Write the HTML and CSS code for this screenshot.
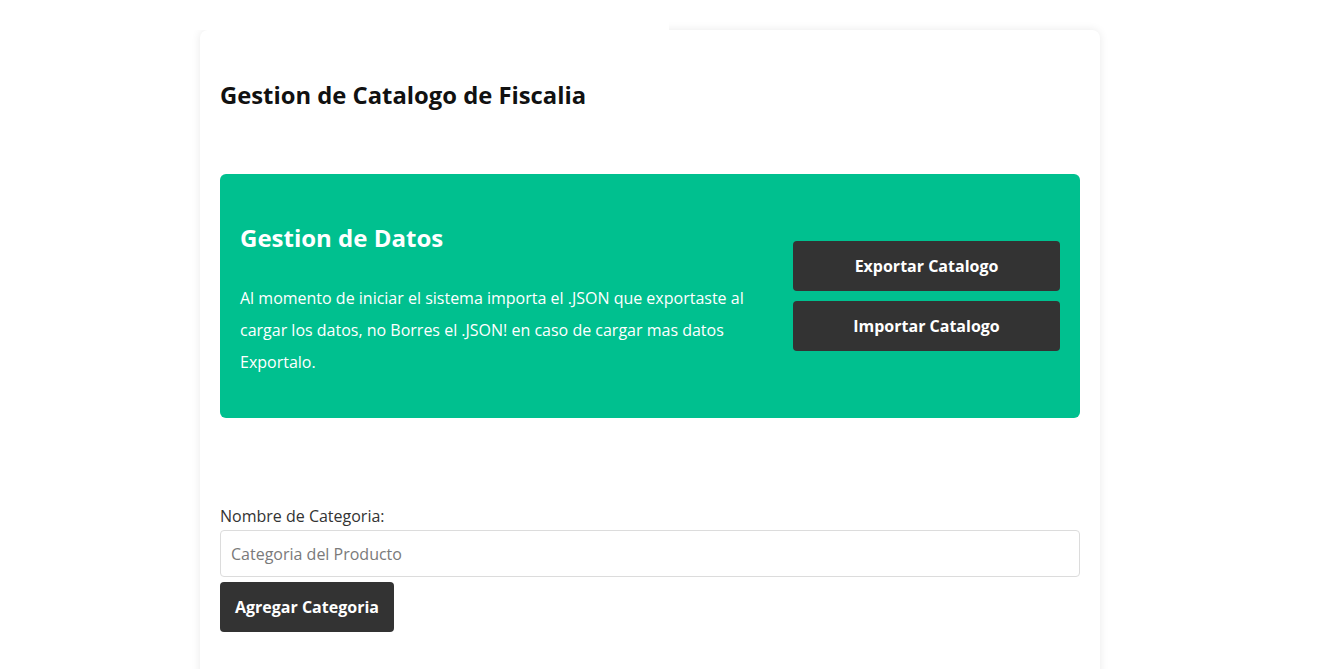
FILE: index.html
```html
<!DOCTYPE html>
<html lang="es">
<head>
<meta charset="utf-8">
<title>Gestion de Catalogo de Fiscalia</title>
<link rel="stylesheet" href="styles.css">
</head>
<body>
<div class="topbar"></div>
<main class="card">
  <h1 class="title">Gestion de Catalogo de Fiscalia</h1>
  <section class="data-box">
    <div class="data-text">
      <h2 class="data-title">Gestion de Datos</h2>
      <p class="data-desc">Al momento de iniciar el sistema importa el .JSON que exportaste al cargar los datos, no Borres el .JSON! en caso de cargar mas datos Exportalo.</p>
    </div>
    <div class="data-actions">
      <button class="btn btn-wide" type="button">Exportar Catalogo</button>
      <button class="btn btn-wide" type="button">Importar Catalogo</button>
    </div>
  </section>
  <form class="cat-form">
    <label class="cat-label" for="cat">Nombre de Categoria:</label>
    <input class="cat-input" id="cat" type="text" placeholder="Categoria del Producto">
    <button class="btn btn-add" type="button">Agregar Categoria</button>
  </form>
</main>
</body>
</html>
```
FILE: styles.css
```css
* { box-sizing: border-box; }
html, body { margin: 0; padding: 0; background: #ffffff; }
body {
  font-family: "Open Sans", "DejaVu Sans", sans-serif;
  color: #333333;
}
.topbar {
  position: relative;
  z-index: 1;
  width: 669px;
  height: 30px;
  background: #ffffff;
}
.card {
  width: 900px;
  margin: 0 0 0 200px;
  padding: 20px 20px 60px;
  background: #ffffff;
  border-radius: 8px;
  box-shadow: 0 0 10px rgba(0, 0, 0, 0.09);
  min-height: 700px;
}
.title {
  margin: 30px 0 0;
  font-size: 23.8px;
  line-height: 30px;
  font-weight: 700;
  color: #111111;
}
.data-box {
  margin-top: 64px;
  background: #00c08f;
  border-radius: 6px;
  padding: 20px;
  display: flex;
  align-items: center;
  gap: 20px;
  color: #ffffff;
}
.data-text {
  flex: 1;
  padding-top: 27px;
}
.data-title {
  margin: 0 0 28px;
  font-size: 24px;
  line-height: 33px;
  font-weight: 700;
}
.data-desc {
  margin: 0 0 20px;
  font-size: 16px;
  line-height: 32px;
}
.data-actions {
  width: 267px;
  display: flex;
  flex-direction: column;
  gap: 10px;
}
.btn {
  font-family: "Open Sans", "DejaVu Sans", sans-serif;
  font-size: 16px;
  font-weight: 700;
  color: #ffffff;
  background: #333333;
  border: none;
  border-radius: 4px;
  height: 50px;
  cursor: pointer;
}
.btn-wide { width: 100%; }
.cat-form {
  margin-top: 87px;
  display: flex;
  flex-direction: column;
  align-items: flex-start;
}
.cat-label {
  font-size: 16px;
  line-height: 22px;
  margin-bottom: 3px;
  color: #333333;
}
.cat-input {
  width: 100%;
  height: 47px;
  padding: 0 10px;
  border: 1px solid #dcdcdc;
  border-radius: 4px;
  font-family: "Open Sans", "DejaVu Sans", sans-serif;
  font-size: 16px;
  color: #333333;
  background: #ffffff;
}
.cat-input::placeholder { color: #7a7a7a; }
.btn-add {
  margin-top: 5px;
  padding: 0 15px;
}
```
